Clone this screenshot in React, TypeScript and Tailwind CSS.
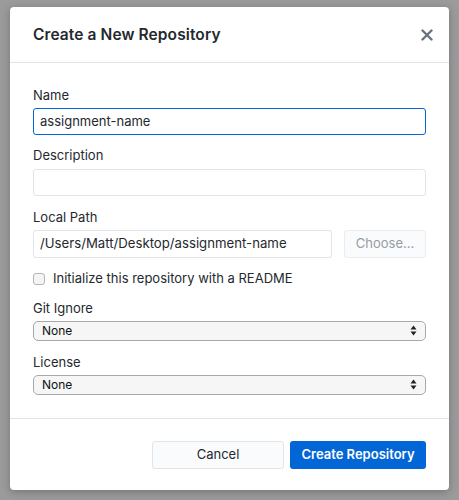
import React from "react";

const font = { fontFamily: "Inter, 'Liberation Sans', sans-serif" };

function Field({ label, children, className = "" }: { label: string; children: React.ReactNode; className?: string }) {
  return (
    <div className={className}>
      <div className="text-[13px] leading-4 text-[#24292e]">{label}</div>
      {children}
    </div>
  );
}

function SelectBox({ value }: { value: string }) {
  return (
    <div className="mt-[5px] h-[20px] flex items-center justify-between rounded-[5px] border border-[#a9a9a9] bg-[#f6f6f6] pl-[8px] pr-[8px] text-[12px] text-[#111]">
      <span>{value}</span>
      <svg width="7" height="11" viewBox="0 0 7 11">
        <path d="M3.5 0.5 L6.5 4.5 H0.5 Z" fill="#222" />
        <path d="M3.5 10.5 L6.5 6.5 H0.5 Z" fill="#222" />
      </svg>
    </div>
  );
}

export default function App() {
  return (
    <div className="h-[500px] w-[459px] bg-[#9b9b9b] pl-[10px] pt-[7px] overflow-hidden" style={font}>
      <div className="w-[439px] h-[483px] bg-white rounded-[4px] shadow-[0_2px_8px_rgba(0,0,0,0.25)] flex flex-col">
        {/* Header */}
        <div className="h-[56px] flex items-center justify-between pl-[23px] pr-[16px] border-b border-[#e1e4e8]">
          <h1 className="text-[15.5px] font-semibold text-[#24292e] tracking-[0.1px]">Create a New Repository</h1>
          <svg width="12" height="12" viewBox="0 0 12 12">
            <path d="M1.5 1.5 L10.5 10.5 M10.5 1.5 L1.5 10.5" stroke="#6a737d" strokeWidth="2.4" strokeLinecap="round" />
          </svg>
        </div>

        {/* Body */}
        <div className="px-[23px] pt-[24px] flex-1">
          <Field label="Name">
            <div className="mt-[5px] h-[27px] flex items-center rounded-[3px] border border-[#0366d6] px-[6px] text-[13px] text-[#24292e]">
              assignment-name
            </div>
          </Field>

          <Field label="Description" className="mt-[12px]">
            <div className="mt-[6px] h-[27px] rounded-[3px] border border-[#e1e4e8]" />
          </Field>

          <Field label="Local Path" className="mt-[13px]">
            <div className="mt-[5px] flex gap-[12px]">
              <div className="w-[299px] h-[28px] flex items-center rounded-[3px] border border-[#e1e4e8] px-[6px] text-[13.2px] text-[#24292e]">
                /Users/Matt/Desktop/assignment-name
              </div>
              <div className="flex-1 h-[28px] flex items-center justify-center rounded-[3px] border border-[#eaecef] bg-[#fafbfc] text-[13px] text-[#959da5]">
                Choose…
              </div>
            </div>
          </Field>

          <label className="mt-[11px] flex items-center gap-[8px] text-[13px] text-[#24292e]">
            <span className="w-[12px] h-[12px] rounded-[3px] border border-[#b5b5b5] bg-[#f4f4f4]" />
            Initialize this repository with a README
          </label>

          <Field label="Git Ignore" className="mt-[11px]">
            <SelectBox value="None" />
          </Field>

          <Field label="License" className="mt-[13px]">
            <SelectBox value="None" />
          </Field>
        </div>

        {/* Footer */}
        <div className="h-[72px] border-t border-[#e1e4e8] flex items-start justify-end gap-[6px] pr-[23px] pt-[22px]">
          <button className="w-[132px] h-[28px] rounded-[3px] border border-[#e1e4e8] bg-[#fafbfc] text-[13px] text-[#24292e]">
            Cancel
          </button>
          <button className="w-[136px] h-[28px] rounded-[3px] bg-[#0366d6] text-[13px] font-semibold text-white">
            Create Repository
          </button>
        </div>
      </div>
    </div>
  );
}
